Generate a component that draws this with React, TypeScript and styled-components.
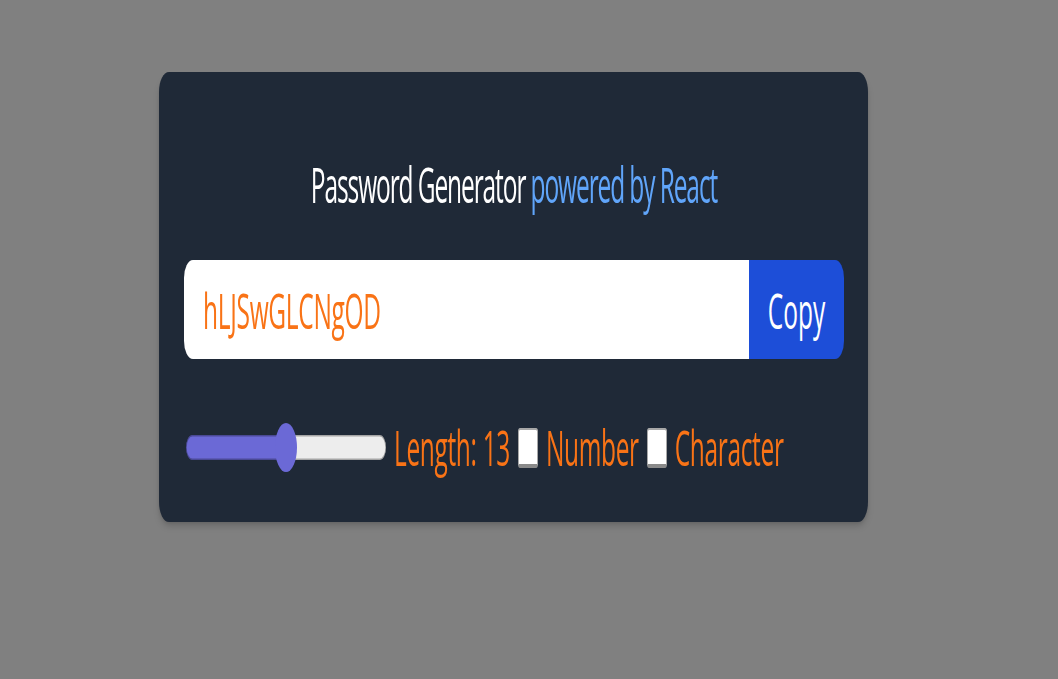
import React, { useState } from 'react';
import styled, { createGlobalStyle } from 'styled-components';

const SQUISH = 0.5;

const GlobalStyle = createGlobalStyle`
  html, body {
    margin: 0;
    padding: 0;
    background: #808080;
    overflow: hidden;
  }
  body {
    font-family: "Open Sans", "Noto Sans", sans-serif;
  }
  * { box-sizing: border-box; }
`;

const Stage = styled.div`
  width: ${1058 / SQUISH}px;
  height: 679px;
  padding: 72px 0 0 318px;
  transform: scaleX(${SQUISH});
  transform-origin: 0 0;
`;

const Card = styled.section`
  width: 1418px;
  height: 450px;
  padding: 88px 48px 50px 50px;
  background: #1f2937;
  border-radius: 20px;
  box-shadow: 0 6px 10px -2px rgba(0, 0, 0, 0.18), 0 3px 6px -3px rgba(0, 0, 0, 0.12);
  display: flex;
  flex-direction: column;
  color: #f97316;
  font-size: 49px;
`;

const Title = styled.h1`
  margin: 0 0 51px;
  font-size: 49px;
  font-weight: 400;
  line-height: 49px;
  letter-spacing: -2.2px;
  text-align: center;
  color: #ffffff;
  white-space: nowrap;
`;

const Accent = styled.span`
  color: #60a5fa;
`;

const InputGroup = styled.div`
  display: flex;
  height: 99px;
  border-radius: 18px;
  overflow: hidden;
  margin-bottom: 64px;
`;

const PasswordField = styled.input`
  flex: 1;
  min-width: 0;
  border: none;
  outline: none;
  padding: 0 36px 0 38px;
  font: inherit;
  font-size: 49px;
  letter-spacing: -0.6px;
  color: #f97316;
  background: #ffffff;
`;

const CopyButton = styled.button`
  flex-shrink: 0;
  width: 190px;
  border: none;
  padding: 0;
  background: #1d4ed8;
  color: #ffffff;
  font: inherit;
  font-size: 49px;
  cursor: pointer;
`;

const Controls = styled.div`
  display: flex;
  align-items: center;
  gap: 16px;
  height: 49px;
`;

const Range = styled.input`
  -webkit-appearance: none;
  appearance: none;
  width: 400px;
  height: 49px;
  margin: 0 0 0 4px;
  background: transparent;
  cursor: pointer;

  &::-webkit-slider-runnable-track {
    height: 25px;
    border-radius: 13px;
    background: linear-gradient(
      to right,
      #6b69d6 0,
      #6b69d6 var(--fill),
      #ededed var(--fill),
      #ededed 100%
    );
    box-shadow: inset 0 0 0 1.5px rgba(0, 0, 0, 0.3);
  }

  &::-webkit-slider-thumb {
    -webkit-appearance: none;
    width: 44px;
    height: 49px;
    margin-top: -12px;
    border: none;
    border-radius: 50%;
    background: #6b69d6;
  }
`;

const Check = styled.input`
  -webkit-appearance: none;
  appearance: none;
  flex-shrink: 0;
  margin: 0;
  width: 40px;
  height: 40px;
  background: #ffffff;
  border: 2px solid #a8a8a8;
  border-bottom: 4px solid #8a8a8a;
  border-radius: 4px;
`;

const Label = styled.label`
  line-height: 49px;
  letter-spacing: -0.7px;
  white-space: nowrap;
  color: #f97316;
`;

export default function App() {
  const [length, setLength] = useState(13);
  const [numbers, setNumbers] = useState(false);
  const [chars, setChars] = useState(false);
  const min = 6;
  const max = 20;
  const p = (length - min) / (max - min);
  const fill = ((22 + p * (400 - 44)) / 400) * 100;

  return (
    <>
      <GlobalStyle />
      <Stage>
        <Card>
          <Title>
            Password Generator <Accent>powered by React</Accent>
          </Title>
          <InputGroup>
            <PasswordField type="text" value="hLJSwGLCNgOD" readOnly placeholder="Password" />
            <CopyButton>Copy</CopyButton>
          </InputGroup>
          <Controls>
            <Range
              type="range"
              min={min}
              max={max}
              value={length}
              onChange={(e) => setLength(Number(e.target.value))}
              style={{ ['--fill' as string]: `${fill}%` } as React.CSSProperties}
            />
            <Label>Length: {length}</Label>
            <Check id="num" type="checkbox" checked={numbers} onChange={() => setNumbers(!numbers)} />
            <Label htmlFor="num">Number</Label>
            <Check id="chr" type="checkbox" checked={chars} onChange={() => setChars(!chars)} />
            <Label htmlFor="chr">Character</Label>
          </Controls>
        </Card>
      </Stage>
    </>
  );
}
